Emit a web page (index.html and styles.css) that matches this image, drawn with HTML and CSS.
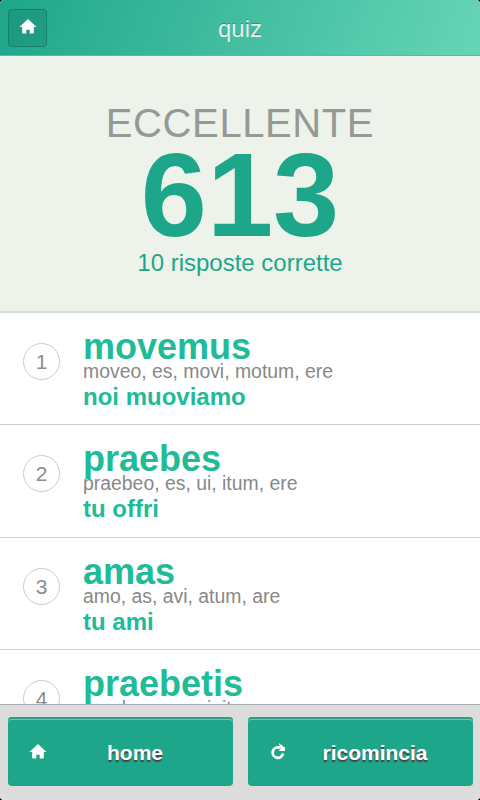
FILE: index.html
```html
<!DOCTYPE html>
<html lang="it">
<head>
  <meta charset="UTF-8" />
  <meta name="viewport" content="width=device-width, initial-scale=1" />
  <title>quiz</title>
  <link rel="stylesheet" href="styles.css">
</head>
<body>
  <svg class="sprite">
    <symbol id="icon-home" viewBox="0 0 16 15">
      <path d="M8 0L16.500 8H13.800V13.800Q13.800 14.600 13 14.600H9.700V10.800H6.300V14.600H3Q2.200 14.600 2.200 13.800V8H-0.500Z" />
    </symbol>
    <symbol id="icon-reload" viewBox="0 0 14 15">
      <path class="arc" d="M9 3.400H6.800A5.200 5.200 0 1 0 12 9.600" />
      <path d="M7.800 -1L14 3.800L14 7H7.500L9.600 5Z" />
    </symbol>
  </svg>

  <div class="app">
    <header>
      <button class="btn-back" aria-label="home"><svg><use href="#icon-home" /></svg></button>
      <h1>quiz</h1>
    </header>

    <main>
      <section class="score">
        <h2>Eccellente</h2>
        <div class="points">613</div>
        <p>10 risposte corrette</p>
      </section>

      <ul class="answers">
        <li>
          <span class="num">1</span>
          <div class="info">
            <h3>movemus</h3>
            <p>moveo, es, movi, motum, ere</p>
            <strong>noi muoviamo</strong>
          </div>
        </li>
        <li>
          <span class="num">2</span>
          <div class="info">
            <h3>praebes</h3>
            <p>praebeo, es, ui, itum, ere</p>
            <strong>tu offri</strong>
          </div>
        </li>
        <li>
          <span class="num">3</span>
          <div class="info">
            <h3>amas</h3>
            <p>amo, as, avi, atum, are</p>
            <strong>tu ami</strong>
          </div>
        </li>
        <li>
          <span class="num">4</span>
          <div class="info">
            <h3>praebetis</h3>
            <p>praebeo, es, ui, itum, ere</p>
          </div>
        </li>
      </ul>
    </main>

    <footer>
      <button class="btn"><svg><use href="#icon-home" /></svg><span>home</span></button>
      <button class="btn"><svg><use href="#icon-reload" /></svg><span>ricomincia</span></button>
    </footer>
  </div>
</body>
</html>
```
FILE: styles.css
```css
* {
  box-sizing: border-box;
}
body {
  margin: 0;
  background: #000;
  font-family: "Liberation Sans", Arial, sans-serif;
}
h1, h2, h3, p, ul {
  margin: 0;
  padding: 0;
  font-weight: normal;
}
button {
  border: none;
  padding: 0;
  font-family: inherit;
  cursor: pointer;
}
svg, symbol {
  display: block;
  fill: #fff;
  overflow: visible;
}
.sprite {
  display: none;
}
.arc {
  fill: none;
  stroke: #fff;
  stroke-width: 2.8;
}

.app {
  height: 100vh;
  display: flex;
  flex-direction: column;
  border-radius: 4px;
  overflow: hidden;
  background: #fff;
}

/* Barra superiore */
header {
  flex: none;
  height: 56px;
  padding: 0 8px;
  display: grid;
  grid-template-columns: 39px 1fr 39px;
  align-items: center;
  background: linear-gradient(110deg, #1fa68b, #66d5b6) padding-box;
  border-bottom: 1px solid #8f9f99;
}
header h1 {
  padding-top: 3px;
  font-size: 24px;
  text-align: center;
  color: #dff2eb;
  text-shadow: 0 -1px 0 rgba(90, 90, 90, 0.6);
}
.btn-back {
  width: 39px;
  height: 38px;
  display: flex;
  align-items: center;
  justify-content: center;
  background: rgba(10, 110, 90, 0.25);
  border: 1px solid rgba(0, 90, 70, 0.35);
  border-radius: 4px;
}
.btn-back svg {
  width: 16px;
  height: 15px;
  margin-bottom: 3px;
}

main {
  flex: 1;
  min-height: 0;
  overflow: hidden;
}

/* Punteggio */
.score {
  height: 257px;
  padding-top: 45px;
  background: #edf3eb;
  border-bottom: 2px solid #d8dbd7;
  text-align: center;
  color: #1da68a;
}
.score h2 {
  font-size: 40px;
  line-height: 44px;
  letter-spacing: 0.6px;
  text-transform: uppercase;
  color: #969a96;
}
.points {
  font-size: 119px;
  line-height: 100px;
  font-weight: bold;
}
.score p {
  padding-top: 3px;
  font-size: 24px;
  line-height: 30px;
}

/* Risposte */
.answers {
  list-style: none;
}
.answers li {
  height: 112.4px;
  padding: 13px 23px 0;
  display: flex;
  gap: 23px;
  border-bottom: 1px solid #d0d0d0;
}
.num {
  flex: none;
  width: 37px;
  height: 37px;
  margin-top: 17px;
  border: 1px solid #ccc;
  border-radius: 50%;
  font-size: 21px;
  line-height: 35px;
  text-align: center;
  color: #8c8c8c;
}
.info h3 {
  font-size: 36px;
  line-height: 42px;
  font-weight: bold;
  color: #21bb98;
}
.info p {
  margin-top: -8px;
  font-size: 19.4px;
  line-height: 22px;
  color: #888;
}
.info strong {
  display: block;
  margin-top: 1px;
  font-size: 24px;
  line-height: 28px;
  color: #21bb98;
}

/* Pulsanti in basso */
footer {
  flex: none;
  height: 96px;
  padding: 12px 7px 14px 8px;
  display: flex;
  gap: 15px;
  background: #dcdcdc;
  border-top: 1px solid #adb0b2;
}
.btn {
  flex: 1;
  padding: 0 22px;
  display: flex;
  align-items: center;
  background: #1da68a;
  border-radius: 4px;
  box-shadow: inset 0 2px 0 #2f9b85, inset 0 3px 0 #6cc9b5;
  color: #fff;
}
.btn svg {
  width: 16px;
  height: 15px;
}
.btn span {
  flex: 1;
  padding: 3px 0 0 13px;
  font-size: 21px;
  font-weight: bold;
  text-shadow: 0 2px 1px #444;
}
```
